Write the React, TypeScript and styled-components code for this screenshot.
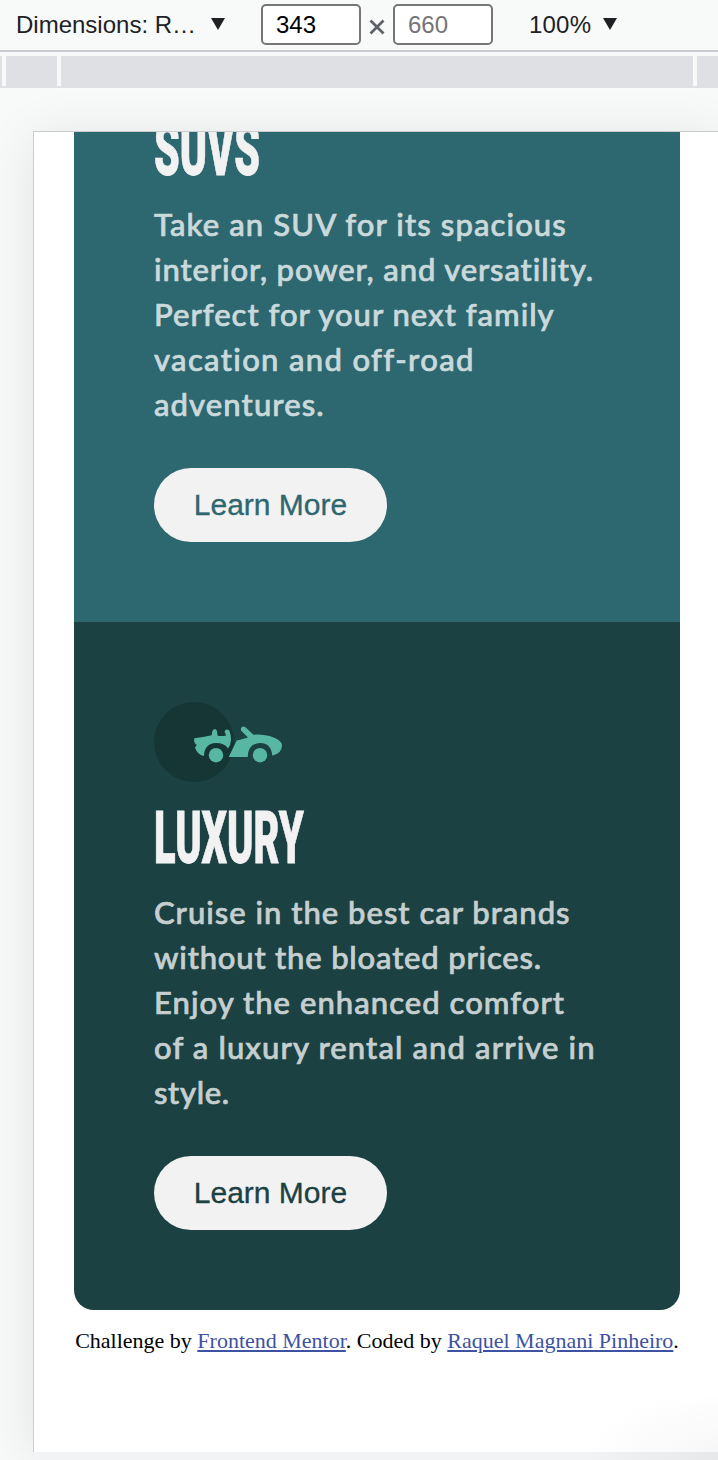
import React from 'react';
import styled, { createGlobalStyle } from 'styled-components';

const GlobalStyle = createGlobalStyle`
  * { box-sizing: border-box; }
  body { margin: 0; background: #f8faf9; overflow: hidden; }
  p, h2 { margin: 0; }
`;

const Window = styled.div`
  width: 718px;
  height: 1460px;
  display: flex;
  flex-direction: column;
  overflow: hidden;
  background: #f8faf9;
`;

const Toolbar = styled.header`
  flex: none;
  height: 52px;
  display: flex;
  align-items: flex-start;
  padding: 4px 0 0 16px;
  border-bottom: 2px solid #caccd1;
  font: 24px/41px 'Liberation Sans', Arial, sans-serif;
  color: #202124;
`;

const DeviceLabel = styled.span`
  width: 195px;
  white-space: nowrap;
`;

const Caret = styled.svg`
  width: 14px;
  height: 12px;
  margin-top: 14px;
  fill: #202124;
`;

const SizeField = styled.input<{ $gap: number }>`
  width: 100px;
  height: 41px;
  margin-left: ${(p) => p.$gap}px;
  padding: 0 0 0 13px;
  border: 2px solid #767676;
  border-radius: 5px;
  background: #fff;
  color: #000;
  font: 24px 'Liberation Sans', Arial, sans-serif;
  &::placeholder { color: #757575; }
`;

const Times = styled.svg`
  width: 16px;
  height: 16px;
  margin: 15px 0 0 8px;
  stroke: #5f6368;
  stroke-width: 2.8;
`;

const Zoom = styled.span`
  width: 63px;
  margin: 0 11px 0 36px;
  letter-spacing: 0.2px;
`;

const Ruler = styled.div`
  flex: none;
  height: 32px;
  margin-top: 4px;
  display: flex;
  background: #dfe0e4;
`;

const Tick = styled.i<{ $gap: number }>`
  width: 4px;
  height: 30px;
  margin-left: ${(p) => p.$gap}px;
  background: #f8faf9;
`;

const Stage = styled.main`
  flex: 1;
  padding: 43px 0 0 33px;
  overflow: hidden;
`;

const Viewport = styled.section`
  width: 687px;
  height: 1321px;
  padding: 0 40px;
  overflow: hidden;
  border: 1px solid #cbcccd;
  border-width: 1px 0 0 1px;
  background: radial-gradient(ellipse 130px 60px at 100% 100%, #f7f7f7, #fff) #fff;
  box-shadow: 0 6px 50px rgba(0, 0, 0, 0.095);
`;

const BottomHandle = styled.div`
  position: relative;
  height: 8px;
  margin-left: 1px;
  background: linear-gradient(90deg, #f1f3f4 80%, #e7e8ea);
`;

const Card = styled.article<{ $bg: string; $height: number; $top: number; $last?: boolean }>`
  width: 606px;
  height: ${(p) => p.$height}px;
  padding: ${(p) => p.$top}px 80px 0;
  overflow: hidden;
  background: ${(p) => p.$bg};
  border-radius: ${(p) => (p.$last ? '0 0 20px 20px' : '0')};
`;

const Badge = styled.div`
  width: 80px;
  height: 80px;
  border-radius: 50%;
  background: #163535;
  padding: 24px 0 0 40px;
`;

const Car = styled.svg`
  display: block;
  width: 89px;
  height: 37px;
  overflow: visible;
  fill: #57b7a2;
`;

const Title = styled.h2<{ $scale: number; $gap: number }>`
  width: max-content;
  height: 74px;
  margin-top: ${(p) => p.$gap}px;
  font: 900 73px/74px Roboto, sans-serif;
  color: #f2f2f2;
  -webkit-text-stroke: 0.8px #f2f2f2;
  transform: scaleX(${(p) => p.$scale});
  transform-origin: left;
`;

const Copy = styled.p<{ $gap: number; $color: string }>`
  margin-top: ${(p) => p.$gap}px;
  font: 500 31px/45px Lato, sans-serif;
  color: ${(p) => p.$color};
  -webkit-text-stroke: 0.7px ${(p) => p.$color};
`;

const Line = styled.span<{ $spacing: number }>`
  display: block;
  width: max-content;
  white-space: nowrap;
  letter-spacing: ${(p) => p.$spacing}px;
`;

const LearnMore = styled.button<{ $color: string }>`
  display: block;
  width: 233px;
  height: 74px;
  margin-top: 41px;
  padding: 0;
  border: 0;
  border-radius: 37px;
  background: #f2f2f2;
  color: ${(p) => p.$color};
  font: 30px 'Liberation Sans', Arial, sans-serif;
  -webkit-text-stroke: 0.3px ${(p) => p.$color};
`;

const Attribution = styled.footer`
  margin-top: 18px;
  font: 22px/26px 'Liberation Serif', 'Times New Roman', serif;
  text-align: center;
  white-space: nowrap;
  color: #000;
  a {
    color: #3e52a3;
    text-decoration: underline;
    text-decoration-thickness: 2px;
    text-underline-offset: 2px;
  }
`;

type CopyLine = [text: string, spacing: number];

const suvCopy: CopyLine[] = [
  ['Take an SUV for its spacious', 1.11],
  ['interior, power, and versatility.', 0.88],
  ['Perfect for your next family', 1],
  ['vacation and off-road', 1.34],
  ['adventures.', 1.1],
];

const luxuryCopy: CopyLine[] = [
  ['Cruise in the best car brands', 1],
  ['without the bloated prices.', 0.81],
  ['Enjoy the enhanced comfort', 1.05],
  ['of a luxury rental and arrive in', 1.12],
  ['style.', 0.65],
];

const Lines = ({ lines }: { lines: CopyLine[] }) => (
  <>
    {lines.map(([text, spacing]) => (
      <Line key={text} $spacing={spacing}>{text}</Line>
    ))}
  </>
);

const DownCaret = () => (
  <Caret viewBox="0 0 14 12"><path d="M0 0H14L7 12Z" /></Caret>
);

export default function App() {
  return (
    <Window>
      <GlobalStyle />
      <Toolbar>
        <DeviceLabel>Dimensions: R…</DeviceLabel>
        <DownCaret />
        <SizeField $gap={36} defaultValue="343" />
        <Times viewBox="0 0 16 16"><path d="M1.5 1.5L14.5 14.5M14.5 1.5L1.5 14.5" /></Times>
        <SizeField $gap={8} placeholder="660" />
        <Zoom>100%</Zoom>
        <DownCaret />
      </Toolbar>
      <Ruler>
        <Tick $gap={2} />
        <Tick $gap={51} />
        <Tick $gap={632} />
      </Ruler>
      <Stage>
        <Viewport>
          <Card $bg="#2d676f" $height={490} $top={0}>
            <Title $scale={0.563} $gap={-19}>SUVS</Title>
            <Copy $gap={15} $color="#cad9db"><Lines lines={suvCopy} /></Copy>
            <LearnMore $color="#2d676f">Learn More</LearnMore>
          </Card>
          <Card $bg="#1b4142" $height={688} $top={80} $last>
            <Badge>
              <Car viewBox="0 0 89 37">
                <path d="M.4 12.3Q9 11 17.6 9.2L18.4 5Q20.5 1.4 23 4.7L23.5 9.6Q27 10.6 32.2 9.6L30.5 5.7Q31.5 2 35.2 4.2Q37.3 9 37 14Q36.8 19 34 22.5Q30.8 17 22 17Q10.5 17.5 9.9 30Q3 28.5 1 21.5L2.7 19Q-1 16 .4 12.3Z" />
                <path d="M34.7 31L42.7 14.5Q46 14 49.5 12.8L54 11.5L47.4 5Q46 2.5 48 1Q49.8 0 51.5 1.2L59.5 8.7Q71 8.1 79 11.3Q88 14.8 88 19.3Q88 27.5 78.3 29.7Q77.3 17 66 17Q54 17.5 53.7 31Z" />
                <circle cx="22" cy="29.2" r="7.2" />
                <circle cx="66" cy="29.2" r="7.2" />
              </Car>
            </Badge>
            <Title $scale={0.546} $gap={19}>LUXURY</Title>
            <Copy $gap={15} $color="#c6cfd0"><Lines lines={luxuryCopy} /></Copy>
            <LearnMore $color="#1b4142">Learn More</LearnMore>
          </Card>
          <Attribution>
            Challenge by <a href="#mentor">Frontend Mentor</a>. Coded by <a href="#author">Raquel Magnani Pinheiro</a>.
          </Attribution>
        </Viewport>
        <BottomHandle />
      </Stage>
    </Window>
  );
}
